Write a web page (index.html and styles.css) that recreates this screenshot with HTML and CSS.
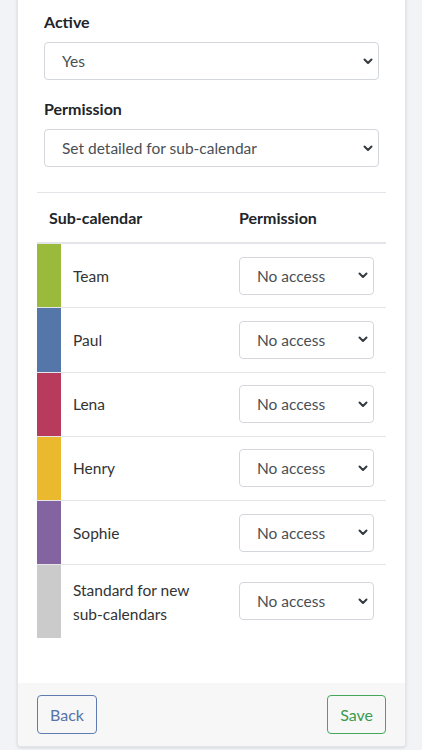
FILE: index.html
```html
<!DOCTYPE html>
<html lang="en">
<head>
<meta charset="utf-8">
<title>Permissions</title>
<link rel="stylesheet" href="styles.css">
</head>
<body>
<div class="page">
  <div class="card">
    <div class="card-body">
      <div class="form-group">
        <label class="form-label">Active</label>
        <select class="select"><option>Yes</option></select>
      </div>
      <div class="form-group">
        <label class="form-label">Permission</label>
        <select class="select"><option>Set detailed for sub-calendar</option></select>
      </div>
      <table class="perm-table">
        <colgroup>
          <col class="col-color">
          <col>
          <col class="col-perm">
        </colgroup>
        <thead>
          <tr>
            <th colspan="2">Sub-calendar</th>
            <th>Permission</th>
          </tr>
        </thead>
        <tbody>
          <tr>
            <td class="swatch team"></td>
            <td class="name">Team</td>
            <td class="perm"><select class="select select-sm"><option>No access</option></select></td>
          </tr>
          <tr>
            <td class="swatch paul"></td>
            <td class="name">Paul</td>
            <td class="perm"><select class="select select-sm"><option>No access</option></select></td>
          </tr>
          <tr>
            <td class="swatch lena"></td>
            <td class="name">Lena</td>
            <td class="perm"><select class="select select-sm"><option>No access</option></select></td>
          </tr>
          <tr>
            <td class="swatch henry"></td>
            <td class="name">Henry</td>
            <td class="perm"><select class="select select-sm"><option>No access</option></select></td>
          </tr>
          <tr>
            <td class="swatch sophie"></td>
            <td class="name">Sophie</td>
            <td class="perm"><select class="select select-sm"><option>No access</option></select></td>
          </tr>
          <tr>
            <td class="swatch standard"></td>
            <td class="name last">Standard for new sub-calendars</td>
            <td class="perm"><select class="select select-sm"><option>No access</option></select></td>
          </tr>
        </tbody>
      </table>
    </div>
    <div class="card-footer">
      <button class="btn btn-back">Back</button>
      <button class="btn btn-save">Save</button>
    </div>
  </div>
</div>
</body>
</html>
```

FILE: styles.css
```css
html, body {
  margin: 0;
  padding: 0;
}

body {
  background: #f2f3f7;
  font-family: "Lato", "Liberation Sans", sans-serif;
  font-size: 15.5px;
  color: #333333;
}

.page {
  padding: 0 16px 4px 17px;
}

.card {
  margin-top: -20px;
  background: #ffffff;
  border: 1px solid #e4e5e8;
  border-radius: 4px;
  box-shadow: 0 1px 3px rgba(0, 0, 0, 0.12);
  overflow: hidden;
}

.card-body {
  padding: 30px 19px 45px 19px;
}

.form-group {
  padding: 0 7px;
  margin-bottom: 18px;
}

.form-group:nth-of-type(2) {
  margin-bottom: 25px;
}

.form-label {
  display: block;
  font-size: 16px;
  font-weight: 700;
  line-height: 22px;
  margin-bottom: 9px;
  color: #212529;
}

.select {
  display: block;
  width: 100%;
  height: 38px;
  padding: 0 28px 0 17px;
  font-family: inherit;
  font-size: 15.5px;
  color: #4a4f55;
  background-color: #ffffff;
  background-image: url("data:image/svg+xml,%3Csvg xmlns='http://www.w3.org/2000/svg' viewBox='0 0 10 7'%3E%3Cpolyline points='1.5,1.5 5,5 8.5,1.5' fill='none' stroke='%23343a40' stroke-width='2' stroke-linecap='round' stroke-linejoin='round'/%3E%3C/svg%3E");
  background-repeat: no-repeat;
  background-position: right 5px center;
  background-size: 10px 7px;
  border: 1px solid #d3d6da;
  border-radius: 4px;
  -webkit-appearance: none;
  appearance: none;
}

.select-sm {
  height: 38px;
}

.perm-table {
  width: 100%;
  border-collapse: collapse;
  table-layout: fixed;
}

.col-color {
  width: 24px;
}

.col-perm {
  width: 159px;
}

.perm-table th {
  text-align: left;
  font-size: 16px;
  font-weight: 700;
  line-height: 24px;
  padding: 12.5px 12px;
  border-top: 1px solid #e3e5e8;
  border-bottom: 2px solid #e3e5e8;
  color: #212529;
}

.perm-table td {
  border-top: 1px solid #e3e5e8;
  padding: 12px;
  line-height: 24px;
  vertical-align: middle;
}

.perm-table td.swatch {
  padding: 0;
}

.perm-table td.name {
  color: #333333;
}

.perm-table td.name.last {
  padding: 12.5px 12px 12px 12px;
}

.perm-table td.perm {
  padding: 12.5px 12px 12.75px 12px;
}

.team { background: #9aba3c; }
.paul { background: #5576a9; }
.lena { background: #b83a5d; }
.henry { background: #ebb92d; }
.sophie { background: #8463a1; }
.standard { background: #cbcbcb; }

.card-footer {
  display: flex;
  justify-content: space-between;
  padding: 12px 19px;
  background: #f7f7f7;
}

.btn {
  box-sizing: border-box;
  height: 39px;
  padding: 0 12px;
  font-family: inherit;
  font-size: 16px;
  line-height: 37px;
  background: transparent;
  border-radius: 4px;
  border: 1px solid;
}

.btn-back {
  color: #5672a6;
  border-color: #5f7bb0;
}

.btn-save {
  color: #3a9a4f;
  border-color: #45a75c;
}
```
